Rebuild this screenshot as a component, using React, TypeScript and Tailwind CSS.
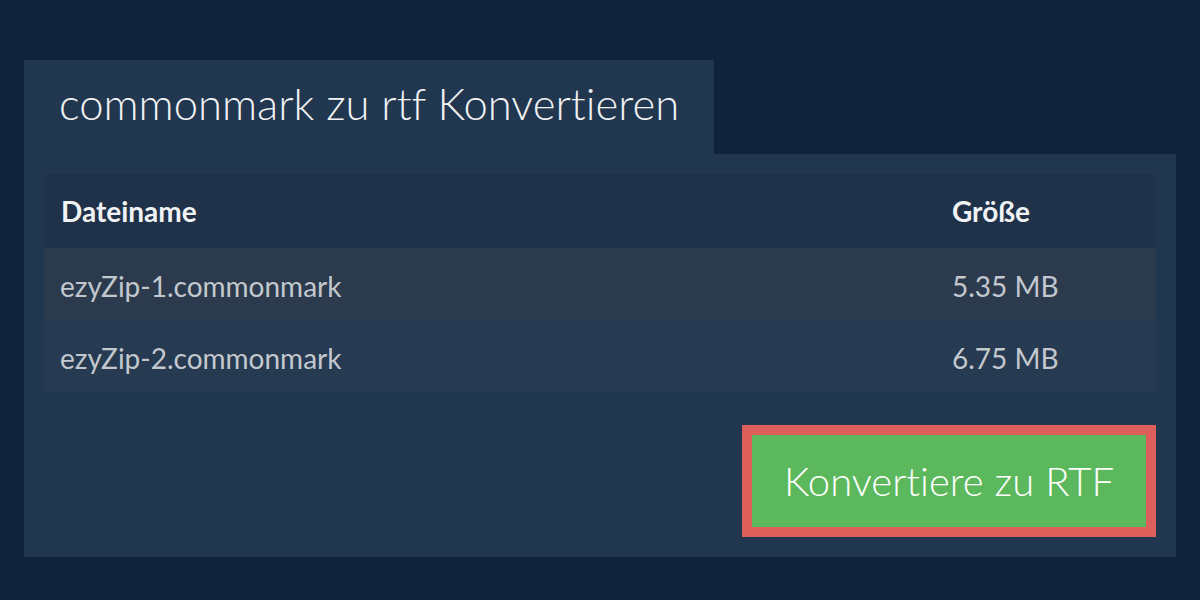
import React from "react";

export default function App() {
  const rows = [
    { name: "ezyZip-1.commonmark", size: "5.35 MB", bg: "bg-[#2b3b4d]" },
    { name: "ezyZip-2.commonmark", size: "6.75 MB", bg: "bg-[#263a51]" },
  ];
  return (
    <div
      className="w-[1200px] h-[600px] bg-[#10233a] pt-[60px] px-[24px] [font-variant-ligatures:none]"
      style={{ fontFamily: "Lato, 'Open Sans', sans-serif" }}
    >
      <div className="w-[690px] h-[94px] bg-[#21364f] flex items-center pl-[35px]">
        <h1 className="text-[43.6px] font-light text-[#f1f2f3] leading-none pb-[6px]">
          commonmark zu rtf Konvertieren
        </h1>
      </div>
      <div className="w-[1152px] h-[403px] bg-[#21364f] pt-[20px] px-[20px]">
        <div className="flex items-center h-[74px] bg-[#1f3249] text-[28px] font-bold text-[#f1f2f3]">
          <div className="flex-1 pl-[17px]">Dateiname</div>
          <div className="w-[204px]">Größe</div>
        </div>
        {rows.map((r) => (
          <div
            key={r.name}
            className={`flex items-center h-[72px] ${r.bg} text-[28px] text-[#c3c8ce]`}
          >
            <div className="flex-1 pl-[16px] pt-[3px]">{r.name}</div>
            <div className="w-[204px] pt-[3px]">{r.size}</div>
          </div>
        ))}
        <div className="flex justify-end pt-[33px]">
          <button className="w-[414px] h-[112px] border-[10px] border-[#dc5f5b] bg-[#5cb85c] text-white text-[40px] font-light leading-none">
            Konvertiere zu RTF
          </button>
        </div>
      </div>
    </div>
  );
}
